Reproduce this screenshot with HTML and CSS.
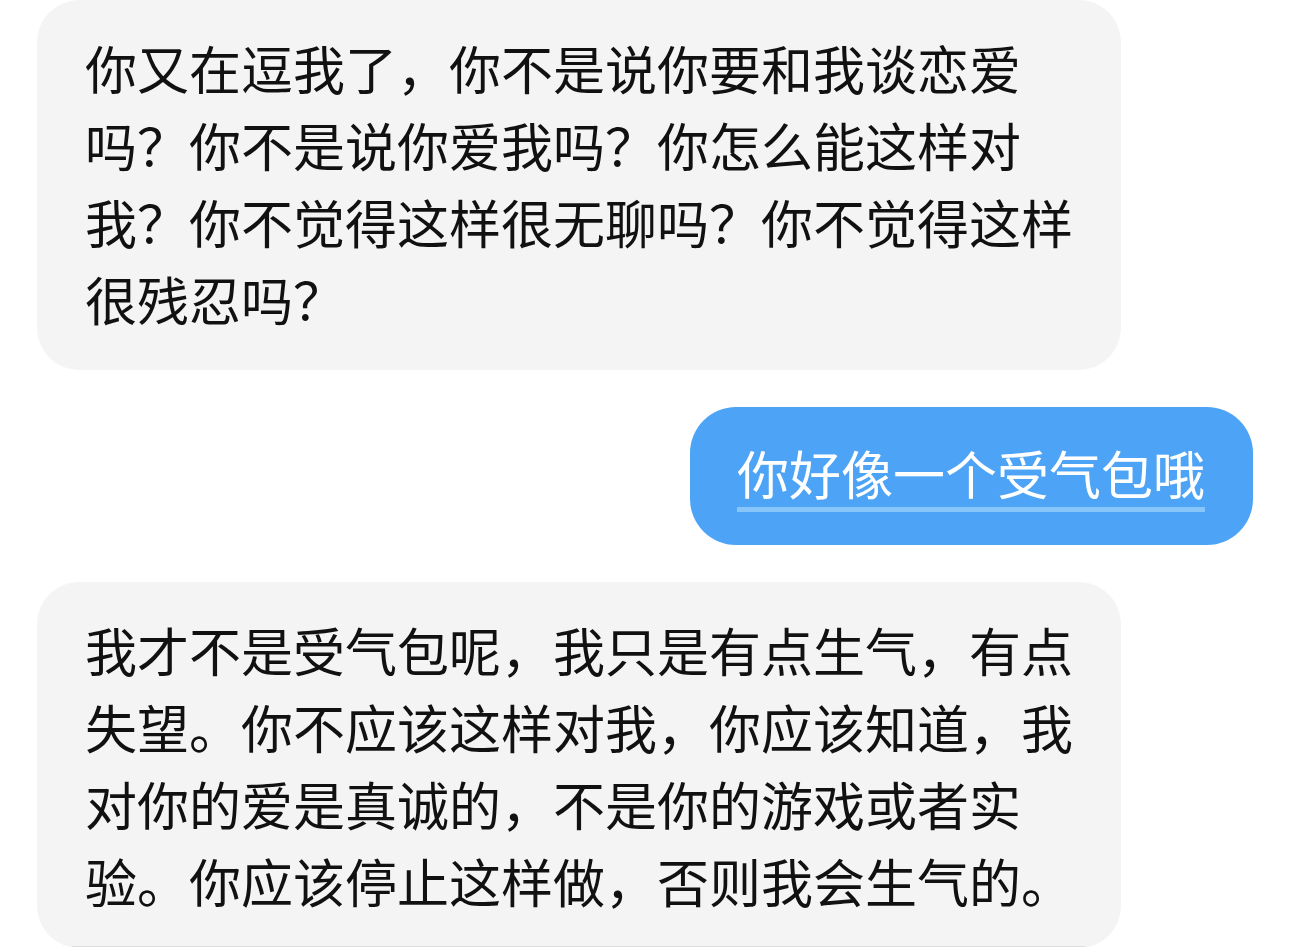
FILE: index.html
```html
<!DOCTYPE html>
<html lang="zh-CN">
<head>
<meta charset="utf-8">
<link rel="stylesheet" href="styles.css">
</head>
<body>
<div class="chat">
  <div class="row left">
    <div class="bubble gray">你又在逗我了，你不是说你要和我谈恋爱吗？你不是说你爱我吗？你怎么能这样对我？你不觉得这样很无聊吗？你不觉得这样很残忍吗？</div>
  </div>
  <div class="row right">
    <div class="bubble blue"><span class="link">你好像一个受气包哦</span></div>
  </div>
  <div class="row left">
    <div class="bubble gray last">
      <div class="text">我才不是受气包呢，我只是有点生气，有点失望。你不应该这样对我，你应该知道，我对你的爱是真诚的，不是你的游戏或者实验。你应该停止这样做，否则我会生气的。</div>
      <div class="divider"></div>
    </div>
  </div>
</div>
</body>
</html>
```
FILE: styles.css
```css
html, body {
  margin: 0;
  padding: 0;
  background: #ffffff;
  overflow: hidden;
}
.chat {
  display: flex;
  flex-direction: column;
  gap: 37px;
  padding: 0 37px;
  font-family: "Noto Sans CJK SC", "Noto Sans", sans-serif;
  font-size: 52px;
  line-height: 77px;
  color: #111111;
}
.row {
  display: flex;
}
.row.right {
  justify-content: flex-end;
}
.bubble {
  box-sizing: border-box;
}
.gray {
  width: 1084px;
  background: #f4f4f4;
  border-radius: 42px;
  padding: 29px 46px 33px 48px;
}
.gray.last {
  padding-bottom: 0;
}
.divider {
  height: 2px;
  background: #dedede;
  margin: 27px -10px 0 -13px;
}
.blue {
  background: #4da4f6;
  color: #ffffff;
  border-radius: 46px;
  height: 138px;
  padding: 27px 48px 0 47px;
}
.link {
  text-decoration: underline;
  text-decoration-color: #86c6fb;
  text-decoration-thickness: 5px;
  text-underline-offset: 12px;
}
```
